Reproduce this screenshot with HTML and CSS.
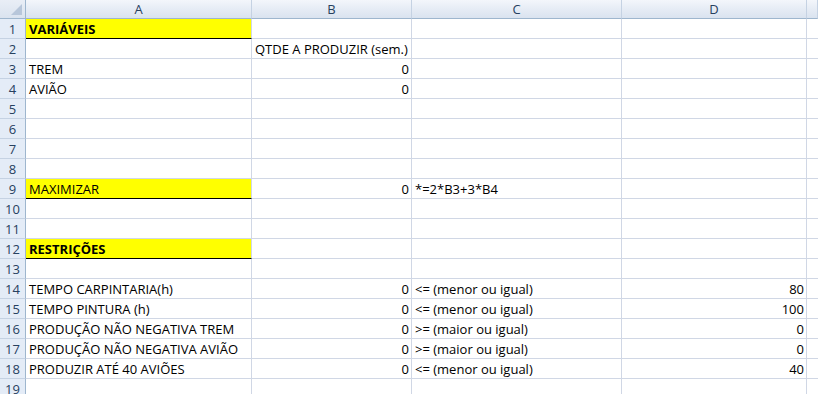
FILE: index.html
```html
<!DOCTYPE html>
<html lang="pt">
<head>
    <meta charset="UTF-8">
    <title>Planilha - Maximizar</title>
    <link rel="stylesheet" href="styles.css">
</head>
<body>
    <div class="sheet">
        <div class="corner"><span class="tri"></span></div>
        <div class="colhead">A</div>
        <div class="colhead">B</div>
        <div class="colhead">C</div>
        <div class="colhead">D</div>
        <div class="colhead last"></div>

        <div class="rowhead">1</div>
        <div class="cell hl bold">VARIÁVEIS</div>
        <div class="cell"></div><div class="cell"></div><div class="cell"></div><div class="cell last"></div>

        <div class="rowhead">2</div>
        <div class="cell"></div>
        <div class="cell">QTDE A PRODUZIR (sem.)</div>
        <div class="cell"></div><div class="cell"></div><div class="cell last"></div>

        <div class="rowhead">3</div>
        <div class="cell">TREM</div>
        <div class="cell num">0</div>
        <div class="cell"></div><div class="cell"></div><div class="cell last"></div>

        <div class="rowhead">4</div>
        <div class="cell">AVIÃO</div>
        <div class="cell num">0</div>
        <div class="cell"></div><div class="cell"></div><div class="cell last"></div>

        <div class="rowhead">5</div>
        <div class="cell"></div><div class="cell"></div><div class="cell"></div><div class="cell"></div><div class="cell last"></div>
        <div class="rowhead">6</div>
        <div class="cell"></div><div class="cell"></div><div class="cell"></div><div class="cell"></div><div class="cell last"></div>
        <div class="rowhead">7</div>
        <div class="cell"></div><div class="cell"></div><div class="cell"></div><div class="cell"></div><div class="cell last"></div>
        <div class="rowhead">8</div>
        <div class="cell"></div><div class="cell"></div><div class="cell"></div><div class="cell"></div><div class="cell last"></div>

        <div class="rowhead">9</div>
        <div class="cell hl">MAXIMIZAR</div>
        <div class="cell num">0</div>
        <div class="cell">*=2*B3+3*B4</div>
        <div class="cell"></div><div class="cell last"></div>

        <div class="rowhead">10</div>
        <div class="cell"></div><div class="cell"></div><div class="cell"></div><div class="cell"></div><div class="cell last"></div>
        <div class="rowhead">11</div>
        <div class="cell"></div><div class="cell"></div><div class="cell"></div><div class="cell"></div><div class="cell last"></div>

        <div class="rowhead">12</div>
        <div class="cell hl bold">RESTRIÇÕES</div>
        <div class="cell"></div><div class="cell"></div><div class="cell"></div><div class="cell last"></div>

        <div class="rowhead">13</div>
        <div class="cell"></div><div class="cell"></div><div class="cell"></div><div class="cell"></div><div class="cell last"></div>

        <div class="rowhead">14</div>
        <div class="cell">TEMPO CARPINTARIA(h)</div>
        <div class="cell num">0</div>
        <div class="cell">&lt;= (menor ou igual)</div>
        <div class="cell num">80</div>
        <div class="cell last"></div>

        <div class="rowhead">15</div>
        <div class="cell">TEMPO PINTURA (h)</div>
        <div class="cell num">0</div>
        <div class="cell">&lt;= (menor ou igual)</div>
        <div class="cell num">100</div>
        <div class="cell last"></div>

        <div class="rowhead">16</div>
        <div class="cell">PRODUÇÃO NÃO NEGATIVA TREM</div>
        <div class="cell num">0</div>
        <div class="cell">&gt;= (maior ou igual)</div>
        <div class="cell num">0</div>
        <div class="cell last"></div>

        <div class="rowhead">17</div>
        <div class="cell">PRODUÇÃO NÃO NEGATIVA AVIÃO</div>
        <div class="cell num">0</div>
        <div class="cell">&gt;= (maior ou igual)</div>
        <div class="cell num">0</div>
        <div class="cell last"></div>

        <div class="rowhead">18</div>
        <div class="cell">PRODUZIR ATÉ 40 AVIÕES</div>
        <div class="cell num">0</div>
        <div class="cell">&lt;= (menor ou igual)</div>
        <div class="cell num">40</div>
        <div class="cell last"></div>

        <div class="rowhead">19</div>
        <div class="cell"></div><div class="cell"></div><div class="cell"></div><div class="cell"></div><div class="cell last"></div>
    </div>
</body>
</html>
```

FILE: styles.css
```css
body {
    margin: 0;
    background: #ffffff;
    font-family: "Open Sans", "Liberation Sans", sans-serif;
    font-size: 13px;
    color: #000000;
    overflow: hidden;
}
.sheet {
    display: grid;
    grid-template-columns: 26px 226px 160px 210px 185px 1fr;
    grid-template-rows: 19px repeat(19, 20px);
    width: 818px;
}
.corner {
    background: linear-gradient(#e9eef6, #dae3ef);
    border-right: 1px solid #9eb6ce;
    border-bottom: 1px solid #9eb6ce;
    position: relative;
}
.tri {
    position: absolute;
    right: 3px;
    bottom: 3px;
    width: 0;
    height: 0;
    border-left: 11px solid transparent;
    border-bottom: 11px solid #b7c6da;
}
.colhead {
    background: linear-gradient(#f3f6fb 0%, #e6ecf5 50%, #dae3ef 100%);
    border-right: 1px solid #c5d2e3;
    border-bottom: 1px solid #9eb6ce;
    text-align: center;
    line-height: 18px;
    color: #27415f;
}
.rowhead {
    background: #e4ecf7;
    border-right: 1px solid #9eb6ce;
    border-bottom: 1px solid #c5d2e3;
    text-align: center;
    line-height: 20px;
    color: #27415f;
}
.cell {
    border-right: 1px solid #d0d7e5;
    border-bottom: 1px solid #d0d7e5;
    padding: 0 2px 0 3px;
    line-height: 21px;
    white-space: nowrap;
    overflow: visible;
}
.cell.last {
    border-right: none;
}
.num {
    text-align: right;
}
.hl {
    background: #ffff00;
    border-bottom: 1px solid #000000;
}
.bold {
    font-weight: bold;
}
```
